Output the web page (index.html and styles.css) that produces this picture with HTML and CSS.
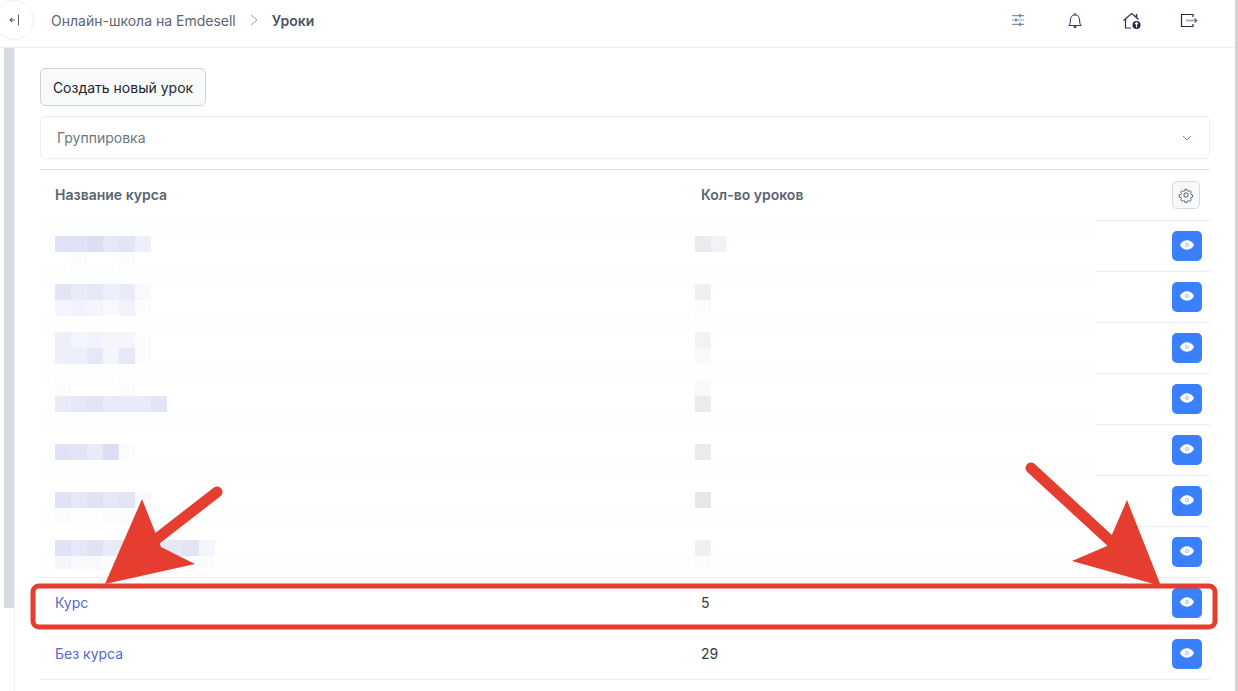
FILE: index.html
```html
<!DOCTYPE html>
<html lang="ru">
<head>
<meta charset="utf-8">
<title>Уроки</title>
<link rel="stylesheet" href="styles.css">
</head>
<body>
<div class="app">
  <header class="topbar">
    <button class="collapse"><svg width="14" height="14" viewBox="0 0 14 14" fill="none" stroke="#5b6472" stroke-width="1.100"><path d="M11.500 1.500V12.500"/><path d="M8 7H3M5.300 4.800L3 7l2.300 2.200"/></svg></button>
    <nav class="crumbs"><span>Онлайн-школа на Emdesell</span><svg class="sep" width="8" height="12" viewBox="0 0 8 12" fill="none" stroke="#9ca3af"><path d="M1 1l6 5-6 5"/></svg><b>Уроки</b></nav>
    <div class="tools">
      <svg width="20" height="20" viewBox="0 0 20 20" fill="none" stroke="#8f9196" stroke-width="1.200"><path d="M4 5.700h12M4 10h12M4 14.300h12"/><path stroke="#2f80c0" stroke-width="1.300" d="M12 4v3.400M8 8.300v3.400M12 12.600V16"/></svg>
      <svg width="20" height="20" viewBox="0 0 20 20" fill="none" stroke="#3a4468" stroke-width="1.100"><path d="M4.200 15.500c1.200-1.400 1.300-3 1.300-6a4.500 4.500 0 0 1 9 0c0 3 .1 4.600 1.300 6z"/><path stroke-width="1.400" d="M10 3v2"/><path stroke-width="2" d="M8.700 17h2.600"/></svg>
      <svg width="20" height="20" viewBox="0 0 20 20" fill="none" stroke="#2b2f6a" stroke-width="1.200"><path d="M1.500 10.500L9.700 3.500l7 6"/><path stroke-width="1.600" d="M14.500 4v3.500"/><path d="M3.500 9v9H9"/><circle cx="14.500" cy="15" r="4" fill="#1f2a44" stroke="none"/><path stroke="#fff" d="M14.500 17.500v-4.500M13 14.200l1.500-1.500 1.500 1.500"/></svg>
      <svg width="20" height="20" viewBox="0 0 20 20" fill="none" stroke="#242b4d" stroke-width="1.200"><path d="M14 7V4.500H2.500v12H14V14"/><path stroke="#a0a2a8" stroke-width="1.600" d="M7 10.500h10"/><path stroke="#3a5a90" d="M15.500 8.300l2.200 2.200-2.200 2.200"/></svg>
    </div>
  </header>
  <div class="body">
    <div class="rail"></div>
    <main class="content">
      <button class="create">Создать новый урок</button>
      <div class="group"><span>Группировка</span><svg width="10" height="6" viewBox="0 0 10 6" fill="none" stroke="#7f89a5"><path d="M1 1l4 4 4-4"/></svg></div>
      <section class="table">
        <div class="row head">
          <div class="c1">Название курса</div>
          <div class="c2">Кол-во уроков</div>
          <div class="c3"><button class="gear"><svg width="16" height="16" viewBox="0 0 24 24" fill="none" stroke="#4b5563" stroke-width="1.500"><circle cx="12" cy="12" r="3.200"/><path d="M10.300 2.500h3.400l.6 2.800 1.900.8 2.400-1.500 2.400 2.400-1.500 2.400.8 1.900 2.800.6v3.400l-2.800.6-.8 1.900 1.500 2.400-2.400 2.400-2.400-1.500-1.900.8-.6 2.800h-3.400l-.6-2.800-1.900-.8-2.400 1.500-2.400-2.400 1.500-2.400-.8-1.900-2.800-.6v-3.400l2.800-.6.800-1.900-1.500-2.400 2.400-2.400 2.400 1.500 1.900-.8z" transform="translate(1.200 1.200) scale(.9)"/></svg></button></div>
        </div>
        <div class="row"><div class="c3"><button class="view"><svg width="16" height="16" viewBox="0 0 24 24"><use href="#eye"/></svg></button></div></div>
        <div class="row"><div class="c3"><button class="view"><svg width="16" height="16" viewBox="0 0 24 24"><use href="#eye"/></svg></button></div></div>
        <div class="row"><div class="c3"><button class="view"><svg width="16" height="16" viewBox="0 0 24 24"><use href="#eye"/></svg></button></div></div>
        <div class="row"><div class="c3"><button class="view"><svg width="16" height="16" viewBox="0 0 24 24"><use href="#eye"/></svg></button></div></div>
        <div class="row"><div class="c3"><button class="view"><svg width="16" height="16" viewBox="0 0 24 24"><use href="#eye"/></svg></button></div></div>
        <div class="row"><div class="c3"><button class="view"><svg width="16" height="16" viewBox="0 0 24 24"><use href="#eye"/></svg></button></div></div>
        <div class="row"><div class="c3"><button class="view"><svg width="16" height="16" viewBox="0 0 24 24"><use href="#eye"/></svg></button></div></div>
        <div class="row">
          <div class="c1"><a href="#">Курс</a></div>
          <div class="c2 num">5</div>
          <div class="c3"><button class="view"><svg width="16" height="16" viewBox="0 0 24 24"><use href="#eye"/></svg></button></div>
        </div>
        <div class="row">
          <div class="c1"><a href="#">Без курса</a></div>
          <div class="c2 num">29</div>
          <div class="c3"><button class="view"><svg width="16" height="16" viewBox="0 0 24 24"><use href="#eye"/></svg></button></div>
        </div>

        <div class="pixelated">
          <div class="px-col">
            <div><i class="p1"></i><i class="p1"></i><i class="p0"></i><i class="p3"></i><i class="p2"></i><i class="p5"></i></div>
            <div><s></s><i class="p9"></i><s></s><s></s><i class="p9"></i></div>
            <div></div>
            <div><i class="p2"></i><i class="p4"></i><i class="p3"></i><i class="p5"></i><i class="p4"></i><i class="p8"></i></div>
            <div><i class="p7"></i><i class="p6"></i><i class="p7"></i><i class="p8"></i><i class="p6"></i><i class="p9"></i></div>
            <div></div>
            <div><i class="p5"></i><i class="p7"></i><i class="p6"></i><i class="p7"></i><i class="p7"></i><i class="p9"></i></div>
            <div><i class="p5"></i><i class="p5"></i><i class="p3"></i><i class="p7"></i><i class="p3"></i><i class="p9"></i></div>
            <div></div>
            <div><i class="p9"></i><s></s><s></s><s></s><i class="p9"></i></div>
            <div><i class="p4"></i><i class="p3"></i><i class="p2"></i><i class="p4"></i><i class="p4"></i><i class="p4"></i><i class="p2"></i></div>
            <div></div>
            <div></div>
            <div><i class="p1"></i><i class="p2"></i><i class="p4"></i><i class="p0"></i><i class="p9"></i></div>
            <div></div>
            <div></div>
            <div><i class="p1"></i><i class="p3"></i><i class="p1"></i><i class="p3"></i><i class="p2"></i><i class="p8"></i></div>
            <div><i class="p9"></i><s></s><s></s><i class="p9"></i><i class="p9"></i></div>
            <div></div>
            <div><i class="p1"></i><i class="p3"></i><i class="p1"></i><i class="p4"></i><i class="p3"></i><i class="p3"></i><i class="p3"></i><i class="p3"></i><i class="p2"></i><i class="p7"></i></div>
            <div class="cut"><i class="p7"></i><i class="p8"></i><i class="p8"></i><i class="p9"></i><i class="p9"></i><i class="p9"></i><i class="p9"></i><i class="p9"></i><i class="p9"></i><i class="p9"></i></div>
          </div>
          <div class="px-col nums">
            <div><i class="g1"></i><i class="g3"></i></div>
            <div></div>
            <div></div>
            <div><i class="g2"></i></div>
            <div><i class="g5"></i></div>
            <div></div>
            <div><i class="g3"></i></div>
            <div><i class="g4"></i></div>
            <div></div>
            <div><i class="g4"></i></div>
            <div><i class="g1"></i></div>
            <div></div>
            <div></div>
            <div><i class="g1"></i></div>
            <div></div>
            <div></div>
            <div><i class="g0"></i></div>
            <div></div>
            <div></div>
            <div><i class="g2"></i></div>
            <div class="cut"><i class="g5"></i></div>
          </div>
        </div>
      </section>
    </main>
  </div>
  <svg class="defs" width="0" height="0"><symbol id="eye" viewBox="0 0 24 24"><path fill="#fff" d="M12 5c5.200 0 9 3.800 10.500 7C21 15.200 17.200 19 12 19S3 15.200 1.500 12C3 8.800 6.800 5 12 5z"/><circle cx="12" cy="12" r="2.400" fill="#f0f4ff" stroke="#a5bdfb" stroke-width="1.400"/></symbol></svg>
  <svg class="marks" width="1238" height="691" viewBox="0 0 1238 691">
    <rect x="33" y="586" width="1182" height="41" rx="6" fill="none" stroke="#e53e30" stroke-width="5"/>
    <path d="M217 492L150 544" stroke="#e53e30" stroke-width="11" stroke-linecap="round"/>
    <path fill="#e53e30" d="M142 499L105 584L195 564L161 547z"/>
    <path d="M1031 468L1118 548" stroke="#e53e30" stroke-width="11" stroke-linecap="round"/>
    <path fill="#e53e30" d="M1127 500L1161 586L1072 561L1107 546z"/>
  </svg>
</div>
</body>
</html>
```

FILE: styles.css
```css
* { box-sizing: border-box; }
html, body { margin: 0; height: 100%; overflow: hidden; background: #fff; }
body { font-family: Inter, "Liberation Sans", sans-serif; color: #4b5563; font-size: 14px; }
.app { position: relative; width: 1238px; height: 691px; border-right: 3px solid #d3d3d3; overflow: hidden; }
.defs { position: absolute; }
.topbar { height: 48px; display: flex; align-items: center; border-bottom: 1px solid #eceef1; padding: 0 36px 7px 0; }
.collapse { width: 40px; height: 40px; margin-left: -6px; border: 1px solid #eef0f6; border-radius: 50%; background: #fff; display: flex; align-items: center; justify-content: center; padding: 0; flex: none; }
.crumbs { display: flex; align-items: center; margin-left: 17px; font-size: 14px; color: #5b6472; }
.crumbs .sep { margin: 0 14px; }
.crumbs b { color: #4b5563; font-weight: 600; }
.tools { margin-left: auto; display: flex; align-items: center; gap: 37px; }
.body { display: flex; height: 643px; }
.rail { width: 15px; flex: none; height: 100%; background: linear-gradient(#d6dbe3,#d6dbe3) 4px 0/10px 560px no-repeat, linear-gradient(#eef0f3,#eef0f3) 14px 0/1px 100% no-repeat; }
.content { flex: 1; padding: 20px 25px 0 25px; min-width: 0; }
.create { display: block; height: 38px; width: 166px; background: #f8f9fa; border: 1px solid #ced4da; border-radius: 5px; color: #212529; font: 14px Inter, "Liberation Sans", sans-serif; padding: 0; }
.group { height: 43px; margin-top: 10px; border: 1px solid #eceef1; border-radius: 5px; display: flex; align-items: center; justify-content: space-between; padding: 0 17px 0 16px; color: #6c757d; }
.table { position: relative; margin-top: 10px; border-top: 1px solid #e3e5e8; }
.row { height: 51px; display: flex; align-items: center; justify-content: flex-end; border-bottom: 1px solid #eceef1; }
.row.head { border-bottom-color: #e6e8eb; font-weight: 600; color: #5b6472; font-size: 14px; }
.c1 { width: 646px; padding-left: 15px; flex: none; margin-right: 8px; margin-top: -2px; }
.c2 { flex: 1; padding-left: 7px; margin-top: -2px; }
.c3 { width: 38px; flex: none; }
.num { color: #343a40; }
a { color: #4f67d8; text-decoration: none; }
.gear { width: 28px; height: 28px; background: #f8f9fa; border: 1px solid #d5d9de; border-radius: 5px; padding: 0; display: flex; align-items: center; justify-content: center; }
.view { width: 30px; height: 30px; background: #3a7ffb; border: 0; border-radius: 5px; padding: 0 0 2px; display: flex; align-items: center; justify-content: center; }
.pixelated { position: absolute; left: -1px; top: 50px; width: 1057px; height: 357px; background: repeating-linear-gradient(#fdfefe 0 16px, #fff 16px 48px); padding: 16px 0 0 16px; display: flex; overflow: hidden; }
.px-col { width: 640px; flex: none; }
.px-col > div { display: flex; height: 16px; }
.px-col > .cut { height: 13px; }
.px-col s, .px-col i { display: block; width: 16px; flex: none; }
.p0 { background: #dcdff4; } .p1 { background: #dfe3f5; } .p2 { background: #e2e5f6; }
.p3 { background: #e6e8f7; } .p4 { background: #e9ebf8; } .p5 { background: #edeffa; }
.p6 { background: #f1f2fb; } .p7 { background: #f5f6fc; } .p8 { background: #f9f9fd; }
.p9 { background: #fcfcfe; }
.g0 { background: #e7e7ea; } .g1 { background: #ebebee; } .g2 { background: #eff0f3; }
.g3 { background: #f2f3f6; } .g4 { background: #f9f9f9; } .g5 { background: #fcfcfc; }
.marks { position: absolute; left: 0; top: 0; pointer-events: none; }
```
